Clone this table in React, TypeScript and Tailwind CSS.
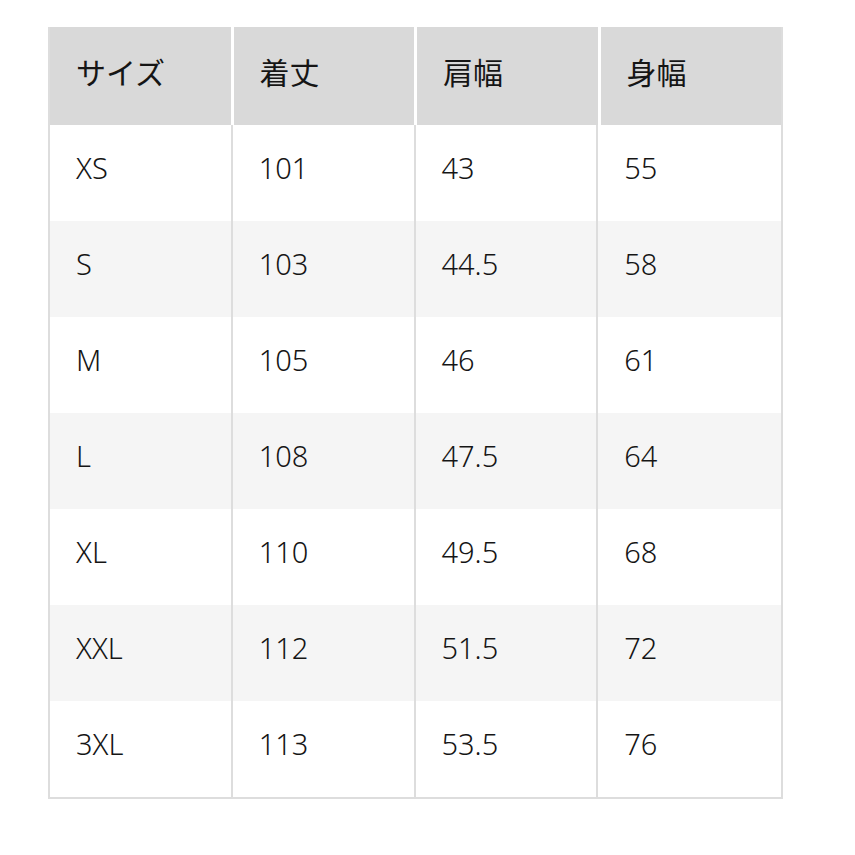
const headers = ['サイズ', '着丈', '肩幅', '身幅'];

const rows = [
  ['XS', '101', '43', '55'],
  ['S', '103', '44.5', '58'],
  ['M', '105', '46', '61'],
  ['L', '108', '47.5', '64'],
  ['XL', '110', '49.5', '68'],
  ['XXL', '112', '51.5', '72'],
  ['3XL', '113', '53.5', '76'],
];

export default function App() {
  return (
    <div
      className="w-[855px] h-[855px] bg-white pt-[27px] pl-[48px] text-[#151515]"
      style={{ fontFamily: '"Noto Sans", "Noto Sans CJK JP", sans-serif' }}
    >
      <div className="w-[735px] border-x-2 border-b-2 border-[#dddddd]">
        <div className="grid grid-cols-4 gap-x-[3px] bg-white">
          {headers.map((h) => (
            <div
              key={h}
              className="h-[98px] bg-[#d9d9d9] flex items-center pl-[26px] pb-[6px] text-[30px] font-normal leading-none"
            >
              {h}
            </div>
          ))}
        </div>
        {rows.map((row, i) => (
          <div
            key={row[0]}
            className={`grid grid-cols-4 h-[96px] ${i % 2 === 1 ? 'bg-[#f5f5f5]' : 'bg-white'}`}
          >
            {row.map((cell, j) => (
              <div
                key={j}
                className={`flex items-center pl-[26px] pb-[12px] text-[29px] font-light leading-none ${j < 3 ? 'border-r-2 border-[#dddddd]' : ''}`}
              >
                {cell}
              </div>
            ))}
          </div>
        ))}
      </div>
    </div>
  );
}
